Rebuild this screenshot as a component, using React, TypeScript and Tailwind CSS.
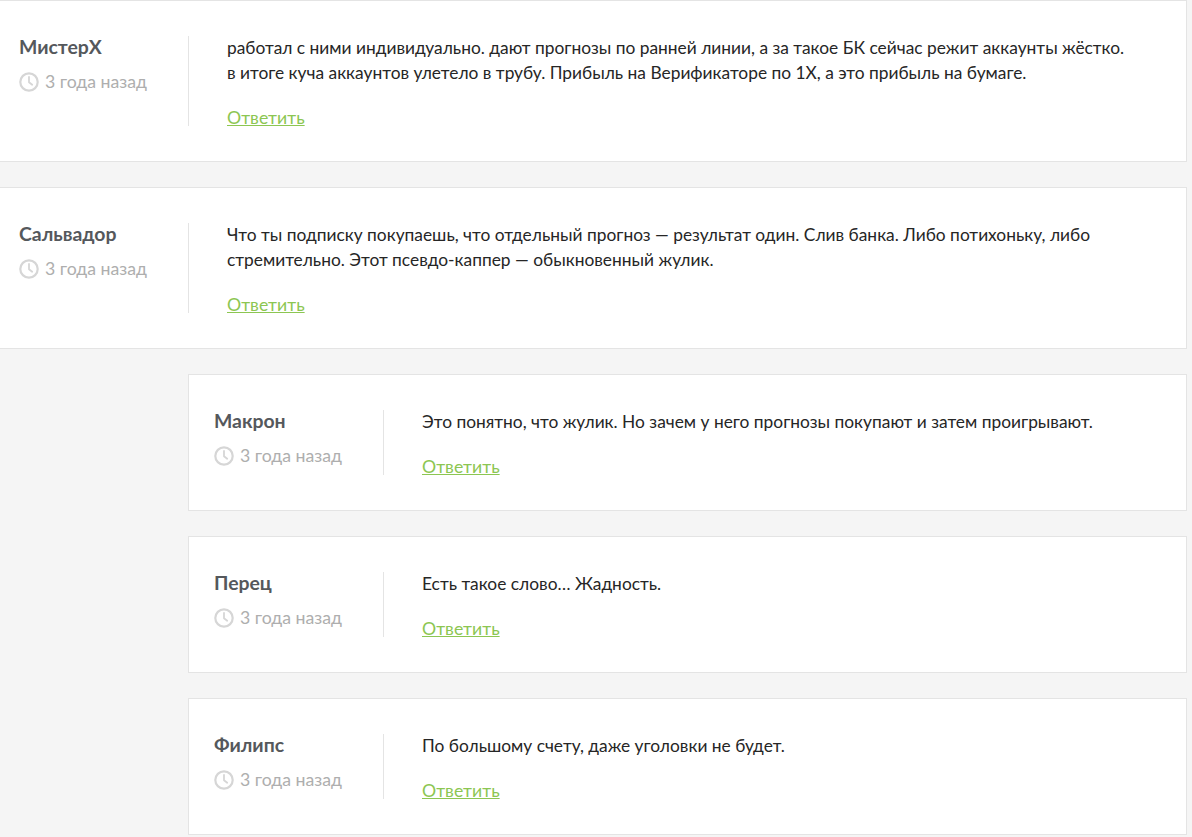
const font = { fontFamily: 'Lato, "Open Sans", sans-serif' };

function Clock() {
  return (
    <svg width="20" height="20" viewBox="0 0 20 20" fill="none" className="shrink-0">
      <circle cx="10" cy="10" r="8.7" stroke="#d6d6d6" strokeWidth="2.2" />
      <path d="M10 5v5.2l3.2 2.6" stroke="#d6d6d6" strokeWidth="1.8" strokeLinecap="round" strokeLinejoin="round" />
    </svg>
  );
}

function Card({ name, lines, nested }: { name: string; lines: string[]; nested?: boolean }) {
  return (
    <div
      className={
        nested
          ? "ml-[188px] flex border border-[#e4e4e4] bg-white pl-[25px] pt-[35px] pb-[35px]"
          : "flex border border-l-0 border-[#e4e4e4] bg-white pl-[19px] pt-[35px] pb-[35px]"
      }
    >
      <div className="w-[169px] shrink-0">
        <div className="-mt-[1px] text-[19.4px] leading-[24px] font-bold text-[#55585c]">{name}</div>
        <div className="mt-[10px] flex items-center gap-[6px] text-[#aeaeae] text-[17.7px] leading-[25px]">
          <Clock />
          <span>3 года назад</span>
        </div>
      </div>
      <div className="border-l border-[#e4e4e4] pl-[38px]">
        <div className="-mt-[1px] text-[17.35px] leading-[25px] text-[#262626]">
          {lines.map((l) => (
            <div key={l} className="whitespace-nowrap">{l}</div>
          ))}
        </div>
        <a className="mt-[24px] -mb-[1px] block text-[17.7px] leading-[18px] text-[#8cc652] underline">Ответить</a>
      </div>
    </div>
  );
}

export default function App() {
  return (
    <div className="min-h-[837px] bg-[#f5f5f5] pr-[5px] flex flex-col gap-[25px]" style={font}>
      <Card
        name="МистерХ"
        lines={[
          "работал с ними индивидуально. дают прогнозы по ранней линии, а за такое БК сейчас режит аккаунты жёстко.",
          "в итоге куча аккаунтов улетело в трубу. Прибыль на Верификаторе по 1Х, а это прибыль на бумаге.",
        ]}
      />
      <Card
        name="Сальвадор"
        lines={[
          "Что ты подписку покупаешь, что отдельный прогноз — результат один. Слив банка. Либо потихоньку, либо",
          "стремительно. Этот псевдо-каппер — обыкновенный жулик.",
        ]}
      />
      <Card nested name="Макрон" lines={["Это понятно, что жулик. Но зачем у него прогнозы покупают и затем проигрывают."]} />
      <Card nested name="Перец" lines={["Есть такое слово… Жадность."]} />
      <Card nested name="Филипс" lines={["По большому счету, даже уголовки не будет."]} />
    </div>
  );
}
